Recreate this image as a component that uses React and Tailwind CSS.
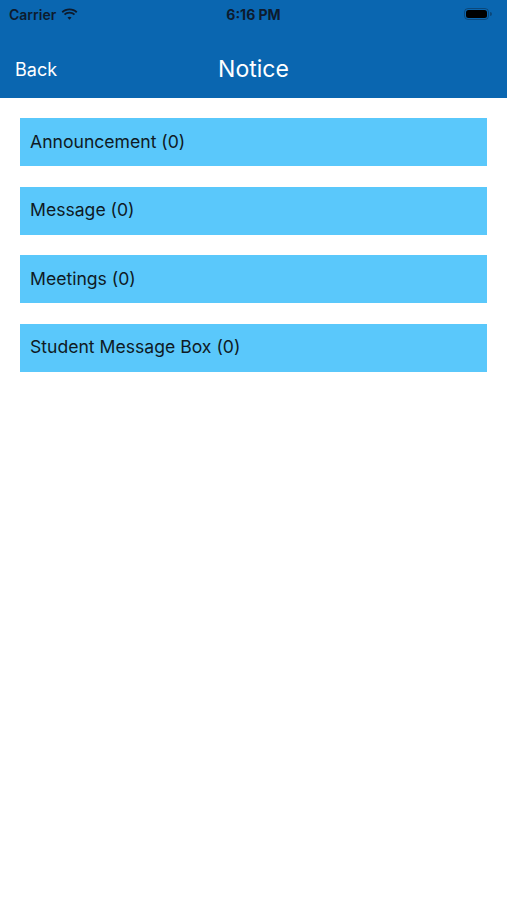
import React from "react";

const items = ["Announcement", "Message", "Meetings", "Student Message Box"];

const StatusBar = () => (
  <div className="relative flex h-[28px] items-center px-[9px] text-[14px] font-semibold text-[#0d1b2e]">
    <div className="flex items-center gap-[5px]">
      <span>Carrier</span>
      <svg width="17" height="12" viewBox="0 0 17 12">
        <path d="M8.5 2.2c2.6 0 4.9 1 6.6 2.7l1.3-1.3C14.4 1.6 11.6.4 8.5.4S2.6 1.6.6 3.6l1.3 1.3C3.6 3.2 5.9 2.2 8.5 2.2z" fill="#0d1b2e" />
        <path d="M8.5 5.5c1.7 0 3.2.7 4.3 1.8l1.3-1.3C12.6 4.5 10.6 3.7 8.5 3.7S4.4 4.5 2.9 6l1.3 1.3C5.3 6.2 6.8 5.5 8.5 5.5z" fill="#0d1b2e" />
        <path d="M8.5 8.8c.8 0 1.5.3 2 .8l-2 2.2-2-2.2c.5-.5 1.2-.8 2-.8z" fill="#0d1b2e" />
      </svg>
    </div>
    <div className="absolute left-1/2 -translate-x-1/2 font-bold">6:16 PM</div>
    <div className="ml-auto mr-[6px] flex items-center">
      <div className="h-[12px] w-[25px] rounded-[4px] border border-[#0d1b2e]/40 p-[1px]">
        <div className="h-full w-full rounded-[2.5px] bg-black" />
      </div>
      <div className="ml-[1px] h-[4px] w-[2px] rounded-r-sm bg-[#0d1b2e]/40" />
    </div>
  </div>
);

export default function App() {
  return (
    <div className="min-h-[900px] bg-white font-['Inter','Liberation_Sans',sans-serif]">
      <div className="bg-[#0a66b0]">
        <StatusBar />
        <div className="relative flex h-[70px] items-center px-[15px] pt-[13px]">
          <span className="text-[18px] text-white">Back</span>
          <span className="absolute left-1/2 top-[13px] flex h-[57px] -translate-x-1/2 items-center text-[23px] text-white">
            Notice
          </span>
        </div>
      </div>
      <div className="flex flex-col gap-[20.5px] px-[20px] pt-[20px]">
        {items.map((label) => (
          <div
            key={label}
            className="flex h-[48px] items-center bg-[#5ac8fb] px-[10px] text-[17.6px] text-[#0f1a24]"
          >
            {label} (0)
          </div>
        ))}
      </div>
    </div>
  );
}
